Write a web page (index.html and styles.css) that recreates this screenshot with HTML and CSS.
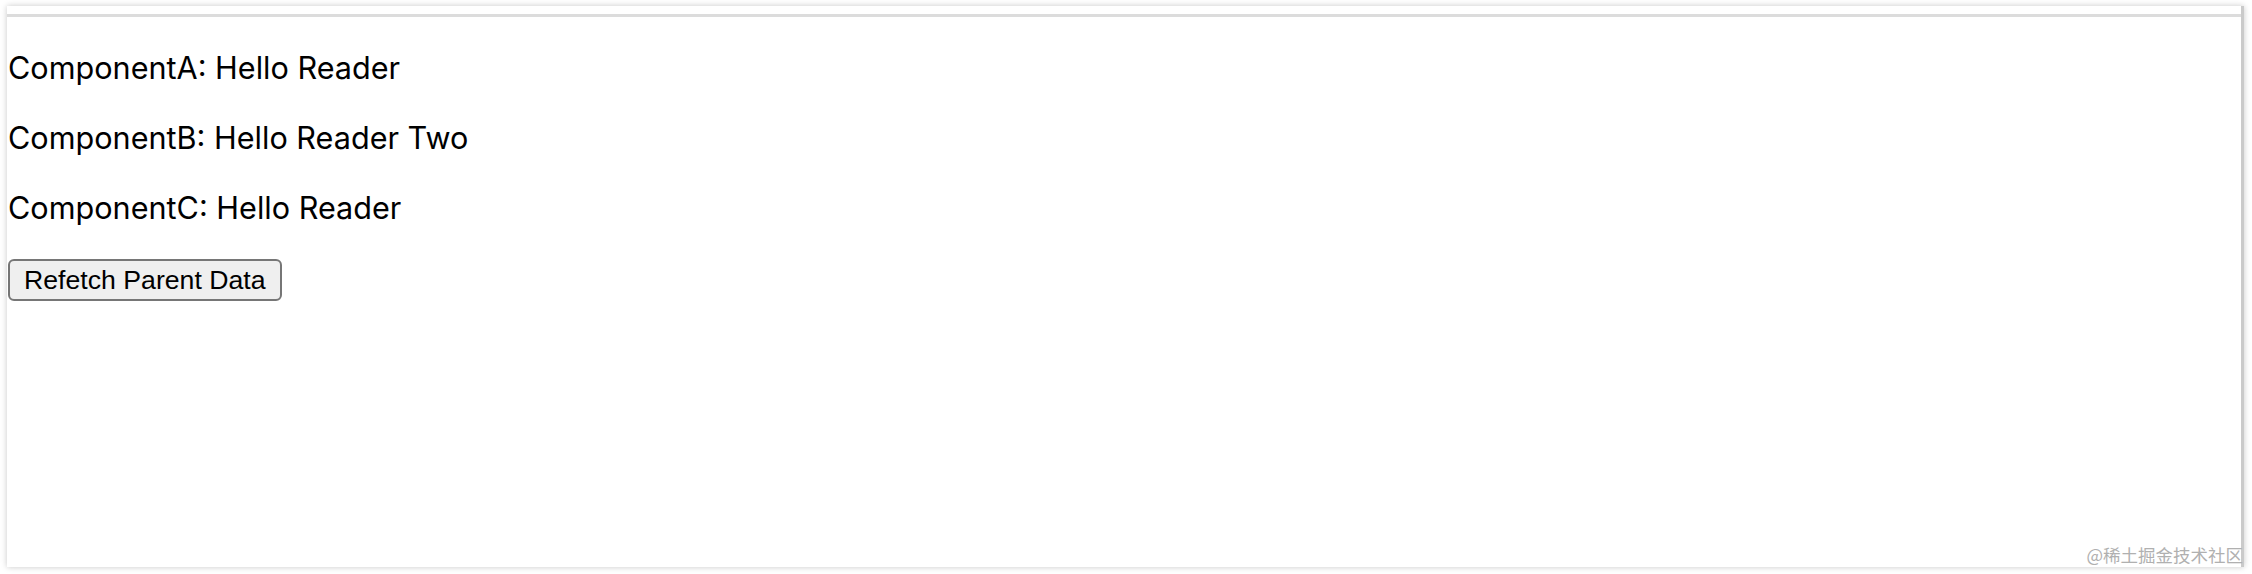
FILE: index.html
```html
<!DOCTYPE html>
<html lang="en">
<head>
<meta charset="utf-8">
<title>Refetch demo</title>
<link rel="stylesheet" href="styles.css">
</head>
<body>
<div class="page">
  <div class="frame">
    <div class="topbar"></div>
    <div class="content">
      <p class="line">ComponentA: Hello Reader</p>
      <p class="line">ComponentB: Hello Reader Two</p>
      <p class="line">ComponentC: Hello Reader</p>
      <button class="btn" type="button">Refetch Parent Data</button>
    </div>
    <div class="watermark">@稀土掘金技术社区</div>
  </div>
</div>
</body>
</html>
```
FILE: styles.css
```css
html, body {
  margin: 0;
  padding: 0;
  background: #ffffff;
}
.page {
  width: 2252px;
  height: 574px;
  padding: 6px 8px 7px 7px;
  box-sizing: border-box;
}
.frame {
  position: relative;
  height: 561px;
  box-sizing: border-box;
  background: #fff;
  border-right: 3px solid #cacaca;
  box-shadow: 0 0 6px rgba(0, 0, 0, 0.22);
  display: flex;
  flex-direction: column;
}
.topbar {
  height: 8px;
  border-bottom: 3px solid #dcdcdc;
}
.content {
  padding-left: 1px;
}
.line {
  margin: 32px 0;
  font-family: Inter, "Noto Sans", sans-serif;
  font-size: 30.6px;
  line-height: 38px;
  color: #000;
}
.btn {
  font-family: "Liberation Sans", Arial, sans-serif;
  font-size: 26.67px;
  line-height: 34px;
  padding: 2px 14px;
  border: 2px solid #767676;
  border-radius: 6px;
  background: #efefef;
  color: #000;
}
.watermark {
  position: absolute;
  right: -2px;
  bottom: 1px;
  font-family: "Noto Sans CJK SC", "Noto Sans", sans-serif;
  font-size: 17.5px;
  line-height: 22px;
  color: #b0b0b0;
}
```
